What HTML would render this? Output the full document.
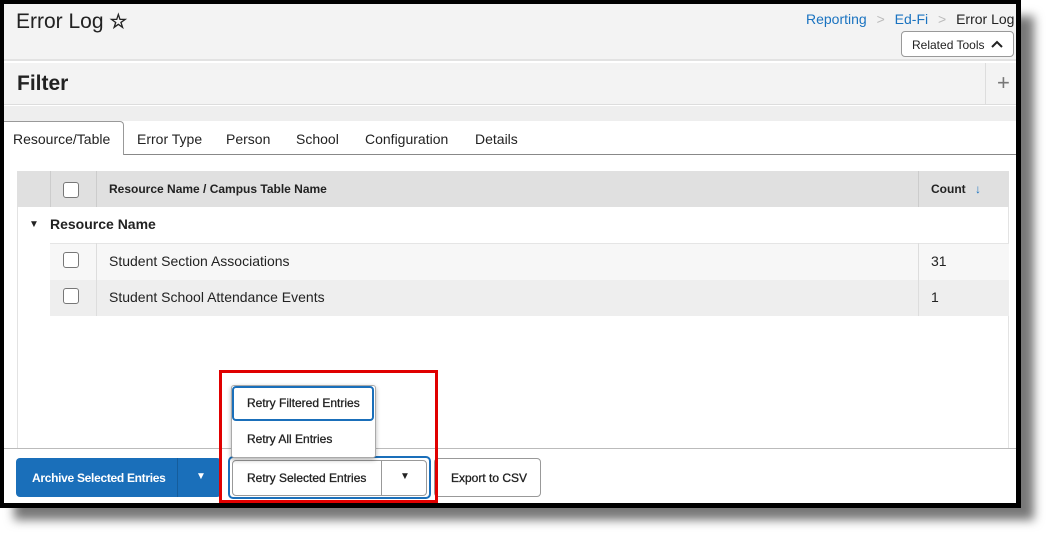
<!DOCTYPE html>
<html><head><style>
*{box-sizing:border-box;margin:0;padding:0}
body{width:1055px;height:540px;background:#fff;font-family:"Liberation Sans",sans-serif;position:relative;overflow:hidden;color:#222}
.abs{position:absolute}
.shadow{left:14px;top:16px;width:1020px;height:504px;background:#777;filter:blur(5px)}
.frame{left:0;top:0;width:1021px;height:508px;background:#000}
.inner{left:4px;top:4px;width:1012px;height:499px;background:#fff;overflow:hidden}
.t{font-size:14px;white-space:nowrap}
.b{font-weight:bold}
.cb{width:16px;height:16px;border:1px solid #777;border-radius:3px;background:#fff}
.btn{border:1px solid #999;border-radius:4px;background:#fff}
</style></head><body>
<div class="abs shadow"></div>
<div class="abs frame"></div>
<div class="abs inner">
 <div class="abs" style="left:0;top:0;width:1012px;height:57px;background:#f3f3f3;border-bottom:2px solid #e2e2e2"></div>
 <div class="abs t" style="left:12px;top:5px;font-size:21px;color:#222">Error Log <span style="font-size:20px;font-weight:bold">☆</span></div>
 <div class="abs t" style="left:802px;top:7px;color:#1a73c0">Reporting <span style="color:#bbb;margin:0 6px">&gt;</span> Ed-Fi <span style="color:#bbb;margin:0 6px">&gt;</span> <span style="color:#222">Error Log</span></div>
 <div class="abs btn" style="left:897px;top:27px;width:113px;height:26px;font-size:12px;padding:6px 0 0 10px">Related Tools <svg width="12" height="9" style="margin-left:3px" viewBox="0 0 12 9"><path d="M1 7 L6 2 L11 7" stroke="#222" stroke-width="2" fill="none"/></svg></div>
 <div class="abs" style="left:0;top:59px;width:1012px;height:42px;background:#f3f3f3;border-bottom:1px solid #ddd"></div>
 <div class="abs t b" style="left:13px;top:68px;font-size:21px">Filter</div>
 <div class="abs" style="left:981px;top:59px;width:1px;height:42px;background:#ddd"></div>
 <div class="abs t" style="left:993px;top:66px;font-size:22px;color:#777">+</div>
 <div class="abs" style="left:0;top:102px;width:1012px;height:15px;background:#eee"></div>
 <div class="abs" style="left:0;top:150px;width:1012px;height:1px;background:#888"></div>
 <div class="abs" style="left:0;top:117px;width:120px;height:34px;background:#fff;border:1px solid #999;border-bottom:none;border-left:none;border-radius:0 4px 0 0"></div>
 <div class="abs t" style="left:9px;top:127px">Resource/Table</div>
 <div class="abs t" style="left:133px;top:127px">Error Type</div>
 <div class="abs t" style="left:222px;top:127px">Person</div>
 <div class="abs t" style="left:292px;top:127px">School</div>
 <div class="abs t" style="left:361px;top:127px">Configuration</div>
 <div class="abs t" style="left:471px;top:127px">Details</div>
 <div class="abs" style="left:13px;top:167px;width:1px;height:277px;background:#e3e3e3"></div>
 <div class="abs" style="left:1004px;top:203px;width:1px;height:241px;background:#e3e3e3"></div>
 <div class="abs" style="left:13px;top:167px;width:992px;height:36px;background:#e0e0e0"></div>
 <div class="abs" style="left:46px;top:167px;width:1px;height:36px;background:#ccc"></div>
 <div class="abs" style="left:92px;top:167px;width:1px;height:36px;background:#ccc"></div>
 <div class="abs" style="left:914px;top:167px;width:1px;height:36px;background:#ccc"></div>
 <div class="abs cb" style="left:59px;top:178px"></div>
 <div class="abs t b" style="left:105px;top:178px;font-size:12px">Resource Name / Campus Table Name</div>
 <div class="abs t b" style="left:927px;top:178px;font-size:12px">Count <span style="color:#1a73c0;margin-left:6px">↓</span></div>
 <div class="abs t" style="left:25px;top:215px;font-size:10px">▼</div>
 <div class="abs t b" style="left:46px;top:212px">Resource Name</div>
 <div class="abs" style="left:46px;top:239px;width:959px;height:37px;background:#f7f7f7;border-top:1px solid #e5e5e5"></div>
 <div class="abs" style="left:46px;top:276px;width:959px;height:36px;background:#eee"></div>
 <div class="abs" style="left:92px;top:239px;width:1px;height:73px;background:#ddd"></div>
 <div class="abs" style="left:914px;top:239px;width:1px;height:73px;background:#ddd"></div>
 <div class="abs cb" style="left:59px;top:248px"></div>
 <div class="abs cb" style="left:59px;top:284px"></div>
 <div class="abs t" style="left:105px;top:249px">Student Section Associations</div>
 <div class="abs t" style="left:105px;top:285px">Student School Attendance Events</div>
 <div class="abs t" style="left:927px;top:249px">31</div>
 <div class="abs t" style="left:927px;top:285px">1</div>
 <div class="abs" style="left:0;top:444px;width:1012px;height:1px;background:#bbb"></div>
 <div class="abs" style="left:12px;top:454px;width:205px;height:39px;background:#1a6fba;border-radius:4px"></div>
 <div class="abs" style="left:173px;top:454px;width:1px;height:39px;background:#155d9c"></div>
 <div class="abs t b" style="left:28px;top:467px;font-size:12px;color:#fff;letter-spacing:-0.3px">Archive Selected Entries</div>
 <div class="abs t" style="left:192px;top:467px;font-size:10px;color:#fff">▼</div>
 <div class="abs" style="left:224px;top:452px;width:203px;height:43px;border:2px solid #1a6fba;border-radius:5px"></div>
 <div class="abs btn" style="left:228px;top:456px;width:195px;height:36px"></div>
 <div class="abs" style="left:377px;top:456px;width:1px;height:36px;background:#999"></div>
 <div class="abs t" style="left:243px;top:467px;font-size:12px;-webkit-text-stroke:0.3px #222">Retry Selected Entries</div>
 <div class="abs t" style="left:396px;top:467px;font-size:10px">▼</div>
 <div class="abs btn" style="left:430px;top:454px;width:107px;height:39px"></div>
 <div class="abs t" style="left:447px;top:467px;font-size:12px;-webkit-text-stroke:0.3px #222">Export to CSV</div>
 <div class="abs" style="left:227px;top:381px;width:145px;height:73px;background:#fff;border:1px solid #aaa;border-radius:3px;box-shadow:0 2px 5px rgba(0,0,0,.3)"></div>
 <div class="abs" style="left:228px;top:382px;width:142px;height:35px;border:2px solid #1a6fba;border-radius:4px"></div>
 <div class="abs t" style="left:243px;top:392px;font-size:12px;-webkit-text-stroke:0.3px #222">Retry Filtered Entries</div>
 <div class="abs t" style="left:243px;top:428px;font-size:12px;-webkit-text-stroke:0.3px #222">Retry All Entries</div>
</div>
<div class="abs" style="left:219px;top:370px;width:219px;height:133px;border:3px solid #e00000"></div>
</body></html>
